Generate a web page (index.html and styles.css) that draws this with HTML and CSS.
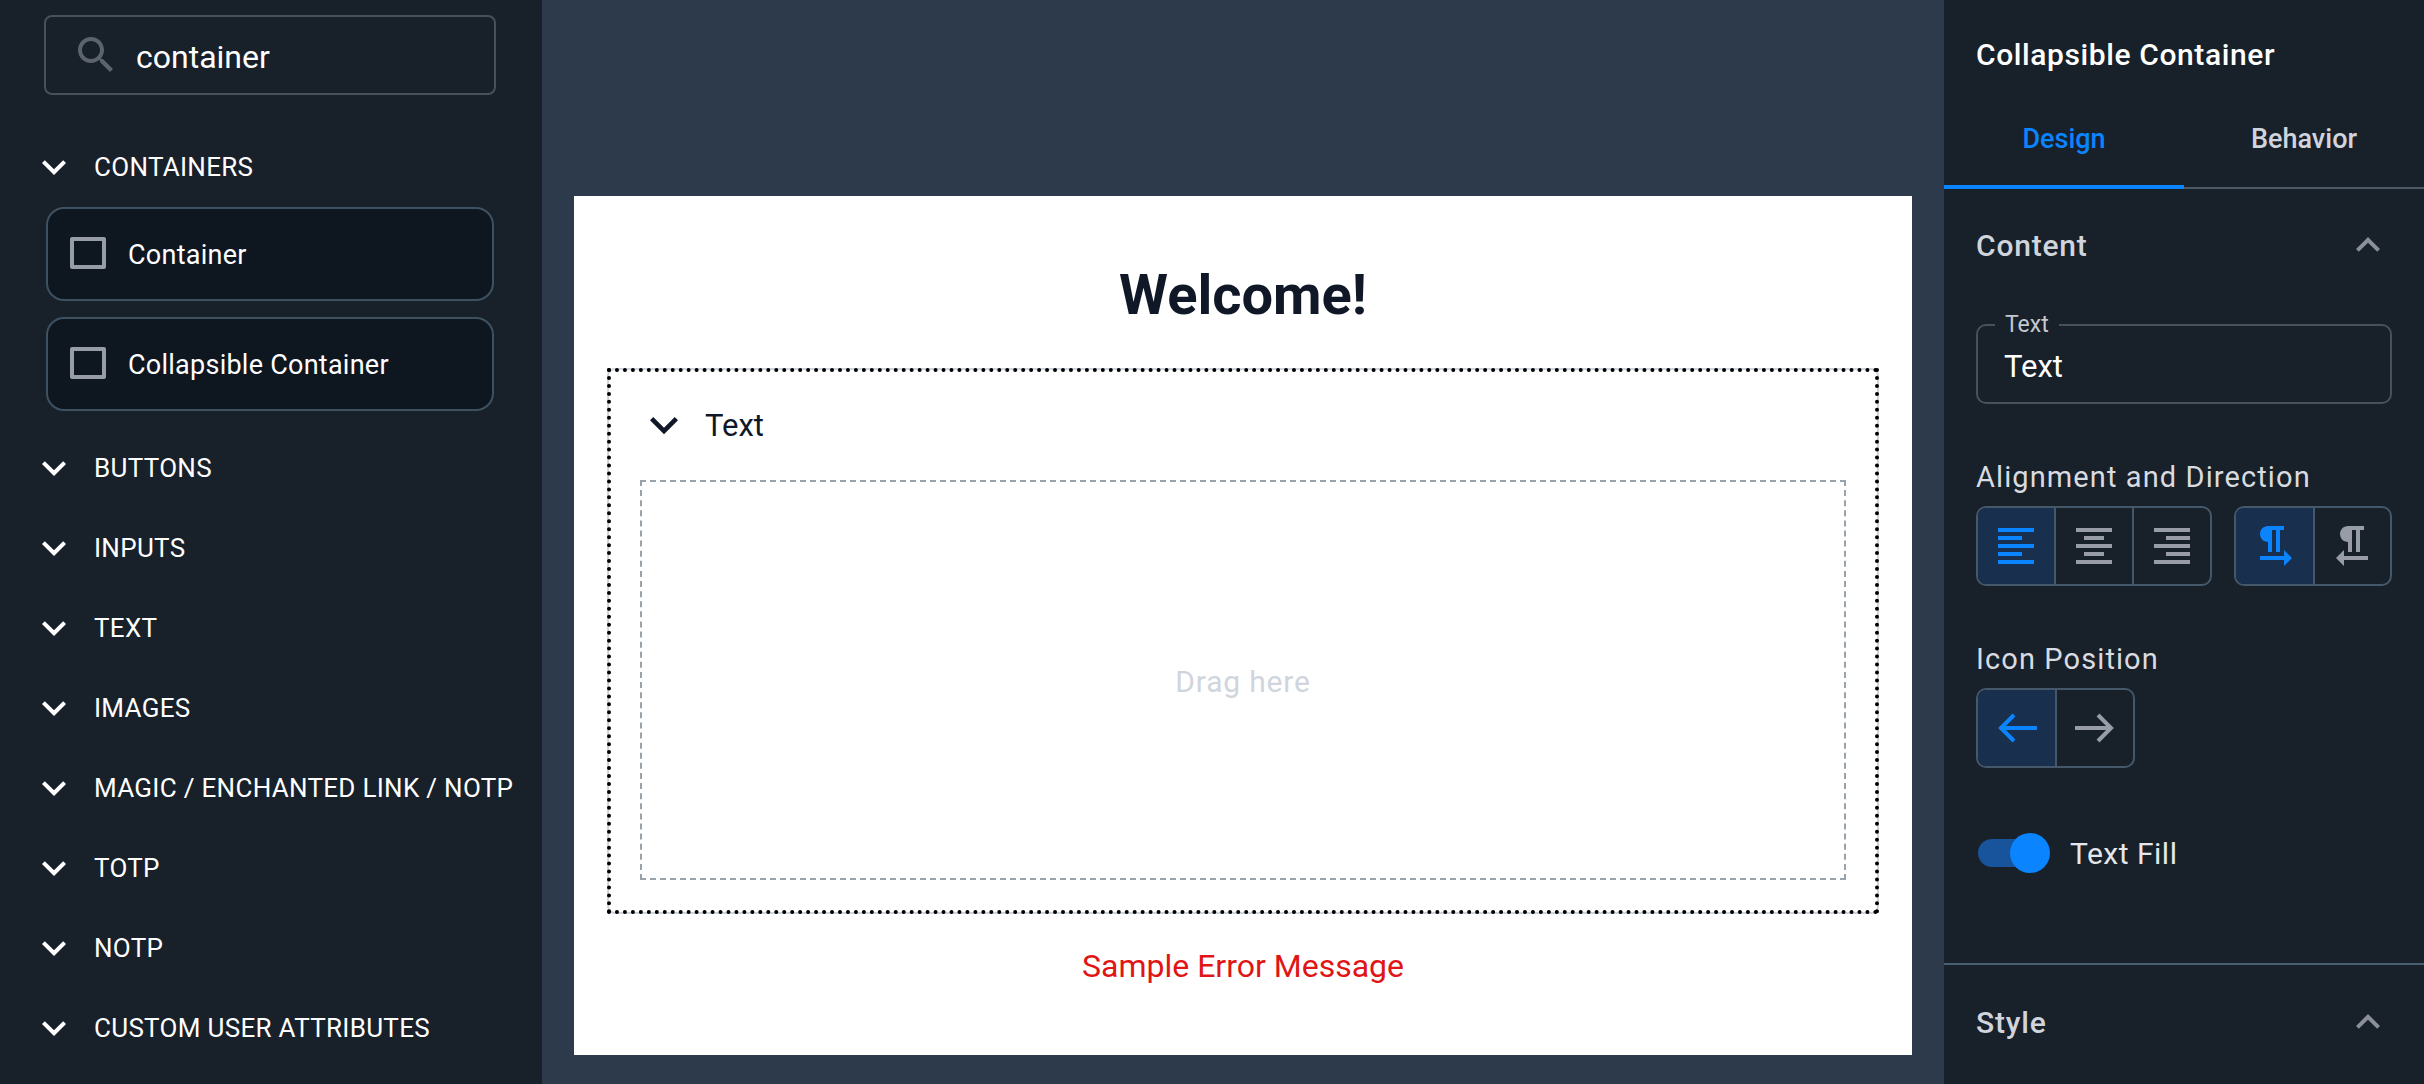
FILE: index.html

```html
<!DOCTYPE html>
<html lang="en">
<head>
  <meta charset="UTF-8" />
  <meta name="viewport" content="width=device-width, initial-scale=1.0" />
  <title>Flow Editor</title>
  <link rel="stylesheet" href="styles.css">
</head>
<body>
  <div class="app">
    <aside class="palette">
      <div class="search">
        <svg class="icon search-icon" viewBox="0 0 24 24"><path d="M15.5 14h-.79l-.28-.27C15.41 12.59 16 11.11 16 9.5 16 5.91 13.09 3 9.5 3S3 5.91 3 9.5 5.91 16 9.5 16c1.61 0 3.09-.59 4.23-1.57l.27.28v.79l5 4.99L20.49 19l-4.99-5zm-6 0C7.01 14 5 11.99 5 9.5S7.01 5 9.5 5 14 7.01 14 9.5 11.99 14 9.5 14z"/></svg>
        <span>container</span>
      </div>

      <div class="group">
        <svg class="icon" viewBox="0 0 24 24"><path d="M16.59 8.59L12 13.17 7.41 8.59 6 10l6 6 6-6z"/></svg>
        <span>CONTAINERS</span>
      </div>
      <div class="cards">
        <div class="card"><span class="square"></span><span>Container</span></div>
        <div class="card"><span class="square"></span><span>Collapsible Container</span></div>
      </div>
      <div class="group"><svg class="icon" viewBox="0 0 24 24"><path d="M16.59 8.59L12 13.17 7.41 8.59 6 10l6 6 6-6z"/></svg><span>BUTTONS</span></div>
      <div class="group"><svg class="icon" viewBox="0 0 24 24"><path d="M16.59 8.59L12 13.17 7.41 8.59 6 10l6 6 6-6z"/></svg><span>INPUTS</span></div>
      <div class="group"><svg class="icon" viewBox="0 0 24 24"><path d="M16.59 8.59L12 13.17 7.41 8.59 6 10l6 6 6-6z"/></svg><span>TEXT</span></div>
      <div class="group"><svg class="icon" viewBox="0 0 24 24"><path d="M16.59 8.59L12 13.17 7.41 8.59 6 10l6 6 6-6z"/></svg><span>IMAGES</span></div>
      <div class="group"><svg class="icon" viewBox="0 0 24 24"><path d="M16.59 8.59L12 13.17 7.41 8.59 6 10l6 6 6-6z"/></svg><span>MAGIC / ENCHANTED LINK / NOTP</span></div>
      <div class="group"><svg class="icon" viewBox="0 0 24 24"><path d="M16.59 8.59L12 13.17 7.41 8.59 6 10l6 6 6-6z"/></svg><span>TOTP</span></div>
      <div class="group"><svg class="icon" viewBox="0 0 24 24"><path d="M16.59 8.59L12 13.17 7.41 8.59 6 10l6 6 6-6z"/></svg><span>NOTP</span></div>
      <div class="group"><svg class="icon" viewBox="0 0 24 24"><path d="M16.59 8.59L12 13.17 7.41 8.59 6 10l6 6 6-6z"/></svg><span>CUSTOM USER ATTRIBUTES</span></div>
    </aside>

    <main class="stage">
      <section class="canvas">
        <h1>Welcome!</h1>
        <div class="collapsible">
          <div class="collapsible-head">
            <svg class="icon" viewBox="0 0 24 24"><path d="M16.59 8.59L12 13.17 7.41 8.59 6 10l6 6 6-6z"/></svg>
            <span>Text</span>
          </div>
          <div class="dropzone">Drag here</div>
        </div>
        <p class="error">Sample Error Message</p>
      </section>
    </main>

    <aside class="inspector">
      <h2>Collapsible Container</h2>
      <div class="tabs">
        <div class="tab active">Design</div>
        <div class="tab">Behavior</div>
      </div>

      <section class="panel">
        <div class="panel-head">
          <span>Content</span>
          <svg class="icon" viewBox="0 0 24 24"><path d="M12 8l-6 6 1.41 1.41L12 10.83l4.59 4.58L18 14z"/></svg>
        </div>

        <fieldset class="field">
          <legend>Text</legend>
          <span>Text</span>
        </fieldset>

        <div class="label">Alignment and Direction</div>
        <div class="button-row">
          <div class="btn-group three">
            <div class="btn on"><svg class="icon" viewBox="0 0 24 24"><path d="M3 21h18v-2H3v2zm0-4h12v-2H3v2zm0-4h18v-2H3v2zm0-4h12V7H3v2zm0-6v2h18V3H3z"/></svg></div>
            <div class="btn"><svg class="icon" viewBox="0 0 24 24"><path d="M7 15v2h10v-2H7zm-4 6h18v-2H3v2zm0-8h18v-2H3v2zm4-6v2h10V7H7zM3 3v2h18V3H3z"/></svg></div>
            <div class="btn"><svg class="icon" viewBox="0 0 24 24"><path d="M3 21h18v-2H3v2zm6-4h12v-2H9v2zm-6-4h18v-2H3v2zm6-4h12V7H9v2zM3 3v2h18V3H3z"/></svg></div>
          </div>
          <div class="btn-group">
            <div class="btn on"><svg class="icon" viewBox="0 0 24 24"><path d="M9 10v5h2V4h2v11h2V4h2V2H9C6.79 2 5 3.79 5 6s1.79 4 4 4zm12 8l-4-4v3H5v2h12v3l4-4z"/></svg></div>
            <div class="btn"><svg class="icon" viewBox="0 0 24 24"><path d="M10 10v5h2V4h2v11h2V4h2V2h-8C7.79 2 6 3.79 6 6s1.79 4 4 4zm-2 7v-3l-4 4 4 4v-3h12v-2H8z"/></svg></div>
          </div>
        </div>

        <div class="label">Icon Position</div>
        <div class="button-row">
          <div class="btn-group">
            <div class="btn on"><svg class="icon arrow" viewBox="0 0 48 48"><path d="M44 24H8M21 11L8 24l13 13"/></svg></div>
            <div class="btn"><svg class="icon arrow" viewBox="0 0 48 48"><path d="M4 24h36M27 11l13 13-13 13"/></svg></div>
          </div>
        </div>

        <div class="toggle-row">
          <span class="toggle"><span class="knob"></span></span>
          <span>Text Fill</span>
        </div>
      </section>

      <section class="panel style-panel">
        <div class="panel-head">
          <span>Style</span>
          <svg class="icon" viewBox="0 0 24 24"><path d="M12 8l-6 6 1.41 1.41L12 10.83l4.59 4.58L18 14z"/></svg>
        </div>
      </section>
    </aside>
  </div>
</body>
</html>
```

FILE: styles.css

```css
* { box-sizing: border-box; }
html, body { margin: 0; padding: 0; height: 100%; overflow: hidden; }
body { font-family: Roboto, "Liberation Sans", sans-serif; background: #2d3a4c; color: #fff; }
.app { display: flex; height: 1084px; }
.icon { width: 48px; height: 48px; flex: none; fill: currentColor; display: block; }

/* left palette */
.palette { width: 542px; flex: none; background: #18202a; padding: 15px 42px 0 30px; }
.search { display: flex; align-items: center; height: 80px; width: 452px; margin: 0 0 32px 14px; padding-left: 26px; border: 2px solid #4a5059; border-radius: 8px; font-size: 32px; }
.search span { padding-top: 3px; margin-left: 1px; }
.search-icon { color: #5d636b; margin-right: 15px; }
.group { display: flex; align-items: center; height: 80px; font-size: 26px; letter-spacing: 0.3px; gap: 16px; white-space: nowrap; }
.cards { display: flex; flex-direction: column; gap: 16px; margin: 0 0 17px 16px; width: 448px; }
.card { display: flex; align-items: center; height: 94px; padding: 2px 0 0 22px; gap: 22px; background: #0e1620; border: 2px solid #3e5161; border-radius: 18px; font-size: 27px; letter-spacing: 0.25px; }
.square { width: 36px; height: 32px; border: 4px solid #979ca6; border-radius: 2px; margin-top: -4px; }

/* canvas */
.stage { flex: 1; padding: 196px 32px 29px; }
.canvas { background: #fff; height: 859px; padding: 0 33px; color: #101828; display: flex; flex-direction: column; }
h1 { margin: 0; height: 172px; padding-top: 26px; display: flex; align-items: center; justify-content: center; font-size: 56px; font-weight: 700; }
.collapsible { position: relative; height: 546px; border: 2px solid #d0d5dd; border-radius: 8px; padding: 0 31px; }
.collapsible::after { content: ""; position: absolute; inset: -2px; border: 4px dotted #000; pointer-events: none; }
.collapsible-head { display: flex; align-items: center; height: 110px; gap: 13px; font-size: 31px; }
.collapsible-head .icon { width: 56px; height: 56px; margin-left: -4px; }
.dropzone { height: 400px; padding-top: 2px; border: 2px dashed #98a2ab; display: flex; align-items: center; justify-content: center; color: #d0d5dd; font-size: 30px; letter-spacing: 0.8px; }
.error { margin: 0; flex: 1; display: flex; justify-content: center; padding-top: 33px; color: #e01515; font-size: 32px; line-height: 38px; }

/* right inspector */
.inspector { width: 480px; flex: none; background: #18202a; }
h2 { margin: 0; padding: 8px 32px 0; height: 100px; display: flex; align-items: center; font-size: 30px; font-weight: 500; letter-spacing: 0.6px; }
.tabs { display: flex; height: 89px; border-bottom: 2px solid #4d5a66; }
.tab { width: 240px; height: 89px; display: flex; align-items: center; justify-content: center; padding-bottom: 11px; font-size: 27px; font-weight: 500; color: #d0d5dd; }
.tab.active { color: #0a84ff; border-bottom: 4px solid #0a84ff; padding-bottom: 7px; }
.panel { padding: 0 32px; }
.panel-head { display: flex; align-items: center; justify-content: space-between; height: 112px; font-size: 30px; font-weight: 500; letter-spacing: 0.8px; color: #d0d5dd; }
.field { margin: 14px 0 0; width: 416px; height: 89px; padding: 0 26px; border: 2px solid #4a5059; border-radius: 10px; font-size: 31px; }
.field legend { padding: 0 10px; margin-left: -9px; font-size: 23px; line-height: 20px; color: #c4c8cf; }
.field span { display: block; margin-top: 13px; }
.label { margin-top: 51px; font-size: 29px; line-height: 44px; letter-spacing: 1.1px; color: #d8dbe0; }
.button-row { display: flex; gap: 22px; margin-top: 7px; }
.btn-group { display: flex; height: 80px; border: 2px solid #44586a; border-radius: 10px; overflow: hidden; }
.btn { width: 78px; display: flex; align-items: center; justify-content: center; color: #979ca6; border-left: 2px solid #44586a; }
.btn:first-child { border-left: 0; width: 77px; }
.three .btn:last-child { width: 79px; }
.btn.on { background: #182f4d; color: #0a84ff; }
.arrow { fill: none; stroke: currentColor; stroke-width: 4; }
.toggle-row { display: flex; align-items: center; gap: 24px; margin-top: 65px; height: 40px; font-size: 30px; letter-spacing: 0.5px; color: #e4e7ec; }
.toggle { display: block; position: relative; width: 68px; height: 28px; border-radius: 14px; background: #17549c; margin-left: 2px; }
.knob { position: absolute; right: -4px; top: -6px; width: 40px; height: 40px; border-radius: 50%; background: #0a84ff; }
.style-panel { margin-top: 90px; border-top: 2px solid #4a6070; }
.style-panel .panel-head { height: 114px; }
.panel-head .icon { color: #8a8f98; }
```
